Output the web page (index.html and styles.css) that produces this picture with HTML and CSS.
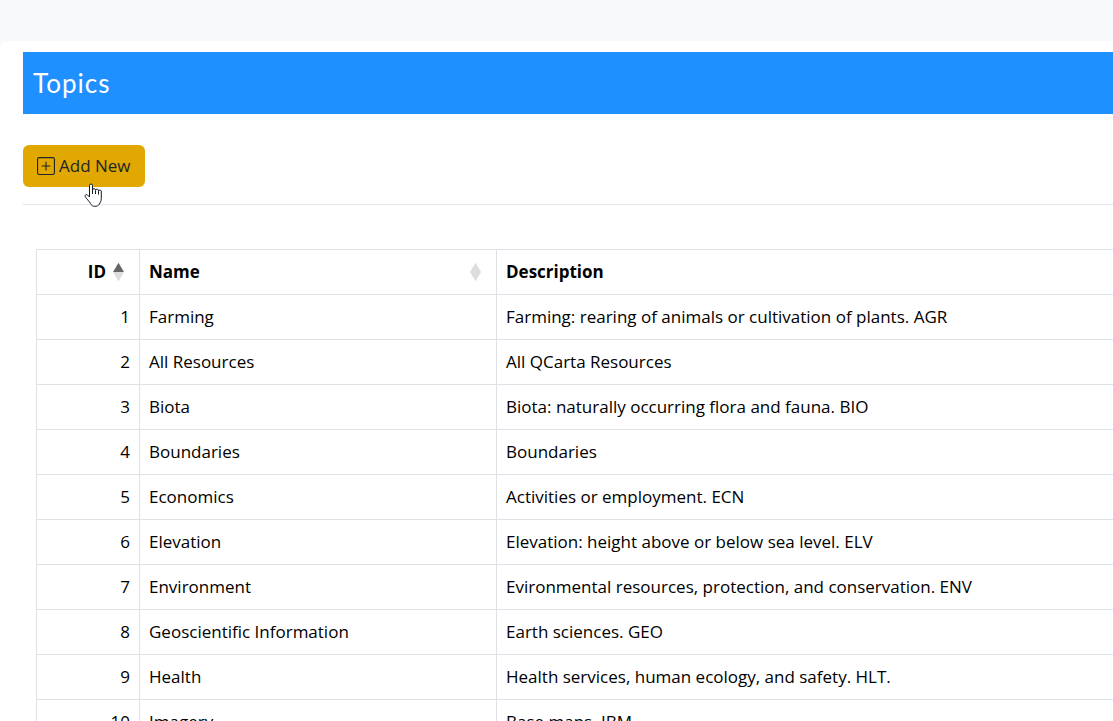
FILE: index.html
```
<!DOCTYPE html>
<html lang="en">
<head>
<meta charset="utf-8">
<title>Topics</title>
<link rel="stylesheet" href="styles.css">
</head>
<body>
<main class="page">
<h1 class="title">Topics</h1>
<div class="toolbar">
<button class="add" type="button">
<svg class="plus" viewBox="0 0 16 16" aria-hidden="true"><path d="M14 1a1 1 0 0 1 1 1v12a1 1 0 0 1-1 1H2a1 1 0 0 1-1-1V2a1 1 0 0 1 1-1zM2 0a2 2 0 0 0-2 2v12a2 2 0 0 0 2 2h12a2 2 0 0 0 2-2V2a2 2 0 0 0-2-2z"/><path d="M8 4a.5.5 0 0 1 .5.5v3h3a.5.5 0 0 1 0 1h-3v3a.5.5 0 0 1-1 0v-3h-3a.5.5 0 0 1 0-1h3v-3A.5.5 0 0 1 8 4"/></svg>
Add New</button>
<svg class="cursor" viewBox="0 0 18 24" aria-hidden="true"><path d="M5.500 14V2.500a1.500 1.500 0 0 1 3 0V7a1.500 1.500 0 0 1 3 .3 1.500 1.500 0 0 1 3 .8 1.400 1.400 0 0 1 2.800.9v6.500c0 3-1.300 4-1.900 5.500C14.500 22.800 13 23.300 10.800 23.300S7.500 22.500 6.500 20.500C5.500 18.500 2.500 16 1.200 13.500c-.6-1.500 1-2.500 2.300-1.500z" fill="#fff" stroke="#111827"/><path d="M8.500 7v4M11.500 7.500V11M14.500 8.300V11.500" fill="none" stroke="#111827"/></svg>
</div>
<div class="panel">
<table class="grid">
<colgroup><col class="c-id"><col class="c-name"><col></colgroup>
<thead><tr>
<th class="num"><span class="head">ID <svg class="sort" viewBox="0 0 12 20" aria-hidden="true"><path d="M6 0l6 10H0z" fill="#666"/><path d="M6 20l6-10H0z" fill="#ddd"/></svg></span></th>
<th><span class="head">Name <svg class="sort" viewBox="0 0 12 20" aria-hidden="true"><path d="M6 0l6 10-6 10-6-10z" fill="#ddd"/></svg></span></th>
<th>Description</th></tr></thead>
<tbody>
<tr><td class="num">1</td><td>Farming</td><td>Farming: rearing of animals or cultivation of plants. AGR</td></tr>
<tr><td class="num">2</td><td>All Resources</td><td>All QCarta Resources</td></tr>
<tr><td class="num">3</td><td>Biota</td><td>Biota: naturally occurring flora and fauna. BIO</td></tr>
<tr><td class="num">4</td><td>Boundaries</td><td>Boundaries</td></tr>
<tr><td class="num">5</td><td>Economics</td><td>Activities or employment. ECN</td></tr>
<tr><td class="num">6</td><td>Elevation</td><td>Elevation: height above or below sea level. ELV</td></tr>
<tr><td class="num">7</td><td>Environment</td><td>Evironmental resources, protection, and conservation. ENV</td></tr>
<tr><td class="num">8</td><td>Geoscientific Information</td><td>Earth sciences. GEO</td></tr>
<tr><td class="num">9</td><td>Health</td><td>Health services, human ecology, and safety. HLT.</td></tr>
<tr><td class="num">10</td><td>Imagery</td><td>Base maps. IBM</td></tr>
</tbody>
</table>
</div>
</main>
</body>
</html>
```
FILE: styles.css
```
* { box-sizing: border-box; }
html { height: 100%; overflow: hidden; }
body {
  margin: 0;
  height: 100%;
  overflow: hidden;
  padding-top: 41px;
  background: #f8f9fb;
  color: #000;
  font: 400 17px/24px "Segoe UI", "Open Sans", "Noto Sans", sans-serif;
}
.page { padding: 11px 0 0 23px; background: #fff; border-top-left-radius: 8px; }
.title {
  margin: 0;
  padding: 16px 10px;
  background: #1e90ff;
  color: #fff;
  font: 400 26px/30px "Century Gothic", Lato, sans-serif;
  letter-spacing: 1px;
}
.toolbar { position: relative; padding: 31px 0 17px; border-bottom: 1px solid #e4e5e7; }
.add {
  display: flex;
  align-items: center;
  gap: 4px;
  height: 42px;
  padding: 0 14px;
  border: 0;
  border-radius: 6px;
  background: #e0a800;
  color: #212529;
  font: inherit;
  cursor: pointer;
}
.plus { width: 18px; height: 18px; fill: currentColor; }
.cursor { position: absolute; left: 61px; top: 69px; width: 18px; height: 24px; }
.panel { padding: 44px 0 0 13px; }
.grid { width: 100%; table-layout: fixed; border-collapse: collapse; }
.c-id { width: 103px; }
.c-name { width: 357px; }
.grid th, .grid td {
  padding: 10px 9px;
  border: 1px solid #dee2e6;
  border-right: 0;
  text-align: left;
  white-space: nowrap;
}
.grid .num { text-align: right; }
.head { display: flex; align-items: center; justify-content: space-between; padding-right: 6px; }
.num .head { justify-content: flex-end; gap: 7px; }
.sort { width: 11px; height: 20px; }
```
